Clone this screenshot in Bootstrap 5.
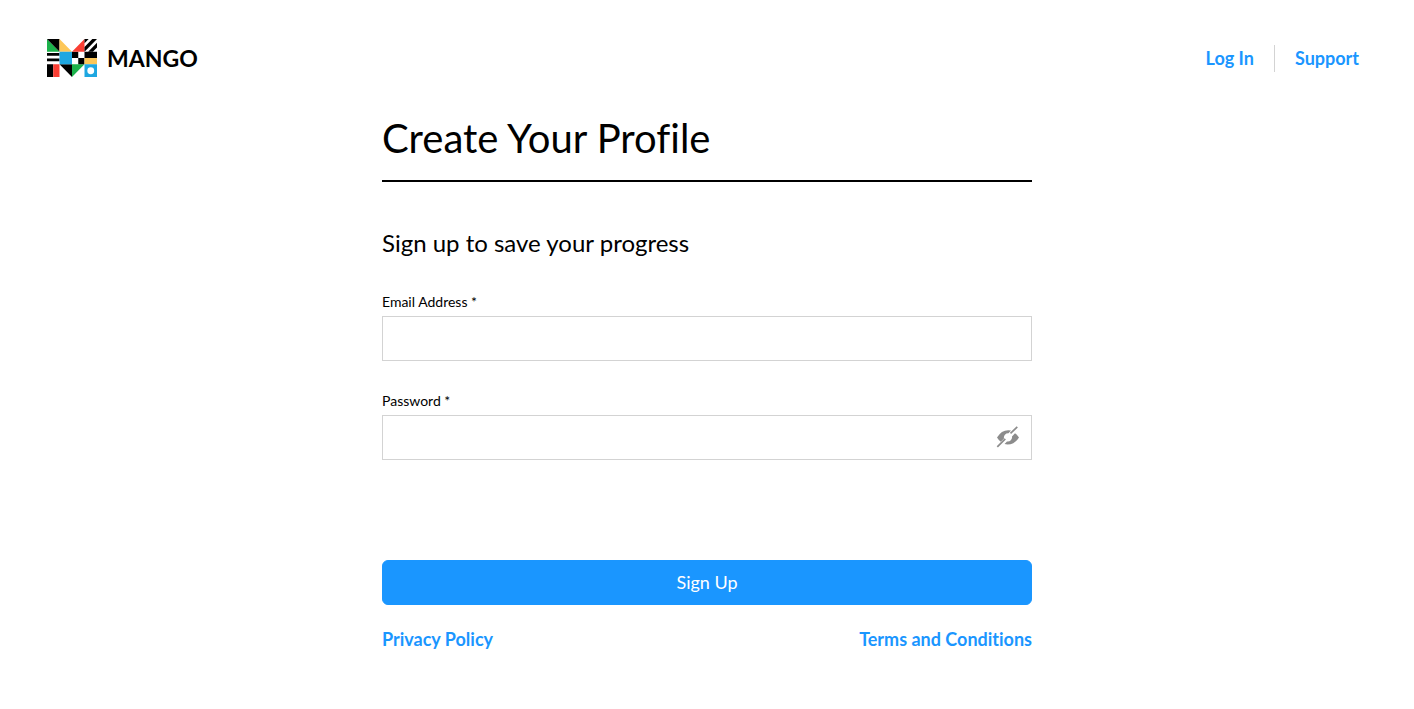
<!DOCTYPE html>
<html lang="en">
<head>
<meta charset="utf-8">
<meta name="viewport" content="width=device-width, initial-scale=1">
<title>Create Your Profile | Mango</title>
<link href="https://cdn.jsdelivr.net/npm/bootstrap@5.3.0/dist/css/bootstrap.min.css" rel="stylesheet">
<style>
  body { font-family: Lato, "Liberation Sans", sans-serif; font-variant-ligatures: no-common-ligatures; color: #000; background: #fff; }
  .site-header { padding: 39px 55px 37px 47px; }
  .brand { gap: 10px; color: #000; font-size: 23px; font-weight: 700; line-height: 38px; }
  .text-link { color: #1a96ff; font-size: 18px; font-weight: 700; line-height: 24px; text-decoration: none; }
  .text-link:hover { text-decoration: underline; }
  .nav-divider { width: 1px; height: 27px; margin: 0 20px; background: #d3d3d3; }
  .profile-form { max-width: 650px; }
  .page-title { font-size: 40px; font-weight: 400; line-height: 48px; padding-bottom: 18px; margin-bottom: 47px; border-bottom: 2px solid #000; }
  .page-lead { font-size: 24px; font-weight: 400; line-height: 28px; margin-bottom: 35px; }
  .form-label { font-size: 14px; line-height: 20px; margin-bottom: 4px; }
  .form-control { height: 45px; border-color: #d3d3d3; border-radius: 0; }
  .field { margin-bottom: 30px; }
  .password-box .form-control { padding-right: 48px; }
  .toggle-eye { right: 12px; color: #8c8c8c; line-height: 0; }
  .btn-signup { --bs-btn-color: #fff; --bs-btn-bg: #1a96ff; --bs-btn-border-color: #1a96ff; --bs-btn-hover-color: #fff; --bs-btn-hover-bg: #0c86ec; height: 45px; margin: 100px 0 22px; padding: 0; font-size: 18px; border-radius: 6px; }
</style>
</head>
<body>
<header class="site-header d-flex justify-content-between align-items-center">
  <a href="#" class="brand d-flex align-items-center text-decoration-none">
    <svg width="50" height="38" viewBox="0 0 48 36" preserveAspectRatio="none" aria-hidden="true">
      <path fill="#1cb24b" d="M0 0v12h12zM24 36V24h12z"/>
      <path fill="#000" d="M0 0h12v12zM0 13.200h12v2.600H0zM0 18.400h12v2.600H0zM0 24h6v12H0zM12 24h12v12zM24 12h6v6h-6zM30 18h6v6h-6zM36 12h12v6H36z"/>
      <path fill="#fdc758" d="M12 0v12h12zM36 18h12v6H36z"/>
      <path fill="#fa3e33" d="M24 12h12V0zM6 24h6v12H6z"/>
      <path fill="#1ea7e1" d="M12 12h12v12H12zM36 24h12v12H36z"/>
      <path fill="#000" d="M36 0h4L36 4zM43.500 0H48L36 12V7.500zM48 3.500V8l-4 4h-4.500z"/>
      <circle cx="42" cy="30" r="3.300" fill="#fff"/>
    </svg>
    <span>MANGO</span>
  </a>
  <nav class="d-flex align-items-center" aria-label="Account">
    <a class="text-link" href="#">Log In</a>
    <span class="nav-divider"></span>
    <a class="text-link" href="#">Support</a>
  </nav>
</header>

<main class="profile-form mx-auto">
  <h1 class="page-title">Create Your Profile</h1>
  <h2 class="page-lead">Sign up to save your progress</h2>
  <form>
    <div class="field">
      <label class="form-label d-block" for="email">Email Address *</label>
      <input class="form-control" type="email" id="email" required>
    </div>
    <div>
      <label class="form-label d-block" for="password">Password *</label>
      <div class="password-box position-relative">
        <input class="form-control" type="password" id="password" required>
        <button type="button" class="toggle-eye btn border-0 p-0 position-absolute top-50 translate-middle-y" aria-label="Show password">
          <svg width="24" height="24" viewBox="0 0 24 24" aria-hidden="true">
            <path fill="currentColor" d="M1 11.500Q5.500 4 12.500 4.200L15 4.600 12.500 7.300A4.300 4.300 0 0 0 8 12.500L4.800 15.700Q2.500 14 1 11.500zM23 11.500Q18.500 18.500 11.500 18.500L8.500 18 11 15.500A4.300 4.300 0 0 0 16 10.500L19 7.200Q21.500 9 23 11.500z"/>
            <path stroke="currentColor" stroke-width="1.700" d="M1.300 20.800 9.300 12.800M14.500 7.300 21.300.8"/>
          </svg>
        </button>
      </div>
    </div>
    <button type="submit" class="btn btn-signup w-100">Sign Up</button>
  </form>
  <div class="d-flex justify-content-between">
    <a class="text-link" href="#">Privacy Policy</a>
    <a class="text-link" href="#">Terms and Conditions</a>
  </div>
</main>
<script src="https://cdn.jsdelivr.net/npm/bootstrap@5.3.0/dist/js/bootstrap.bundle.min.js"></script>
</body>
</html>
